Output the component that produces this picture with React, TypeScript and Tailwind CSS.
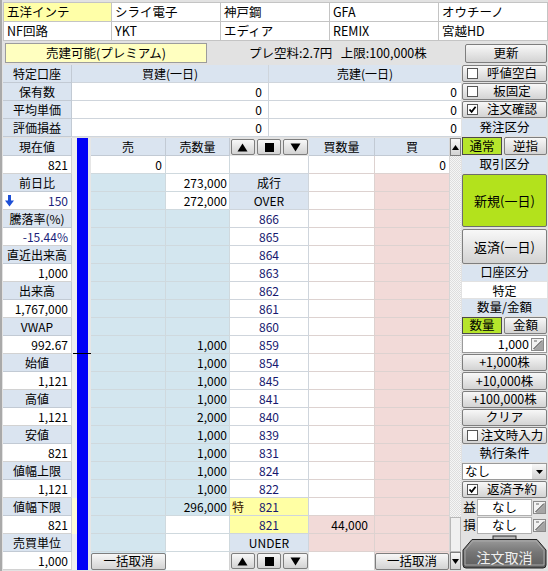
import React from "react";

const W = "bg-white";
const S = "bg-[#d3e6ef]";
const B = "bg-[#f2dad8]";
const L = "bg-[#dae4f0]";
const Y = "bg-[#ffffa4]";

const tabs = [
  ["五洋インテ", "シライ電子", "神戸鋼", "GFA", "オウチーノ"],
  ["NF回路", "YKT", "エディア", "REMIX", "宮越HD"],
];

const leftCol: { text: string; kind: "l" | "v"; color?: string; arrow?: boolean; gap?: string }[] = [
  { text: "現在値", kind: "l" },
  { text: "821", kind: "v" },
  { text: "前日比", kind: "l" },
  { text: "150", kind: "v", color: "text-[#1b1f7a]", arrow: true },
  { text: "騰落率(%)", kind: "l" },
  { text: "-15.44%", kind: "v", color: "text-[#1b1f7a]" },
  { text: "直近出来高", kind: "l" },
  { text: "1,000", kind: "v" },
  { text: "出来高", kind: "l" },
  { text: "1,767,000", kind: "v" },
  { text: "VWAP", kind: "l" },
  { text: "992.67", kind: "v" },
  { text: "始値", kind: "l" },
  { text: "1,121", kind: "v" },
  { text: "高値", kind: "l" },
  { text: "1,121", kind: "v" },
  { text: "安値", kind: "l" },
  { text: "821", kind: "v" },
  { text: "値幅上限", kind: "l" },
  { text: "1,121", kind: "v" },
  { text: "値幅下限", kind: "l", gap: "bg-[#fdfbd8]" },
  { text: "821", kind: "v", gap: "bg-[#fdfbd8]" },
  { text: "売買単位", kind: "l" },
  { text: "1,000", kind: "v" },
];

type BoardRow = {
  sell?: string;
  sellBg: string;
  sq?: string;
  sqBg: string;
  price?: string;
  priceBg: string;
  priceNum?: boolean;
  toku?: boolean;
  bq?: string;
  bqBg: string;
  buy?: string;
  buyBg: string;
};

const ladder: [string, string][] = [
  ["866", ""],
  ["865", ""],
  ["864", ""],
  ["863", ""],
  ["862", ""],
  ["861", ""],
  ["860", ""],
  ["859", "1,000"],
  ["854", "1,000"],
  ["845", "1,000"],
  ["841", "1,000"],
  ["840", "2,000"],
  ["839", "1,000"],
  ["831", "1,000"],
  ["824", "1,000"],
  ["822", "1,000"],
];

const boardRows: BoardRow[] = [
  { sell: "0", sellBg: W, sqBg: W, priceBg: W, bqBg: W, buy: "0", buyBg: W },
  { sellBg: S, sq: "273,000", sqBg: W, price: "成行", priceBg: L, bqBg: W, buyBg: B },
  { sellBg: S, sq: "272,000", sqBg: W, price: "OVER", priceBg: L, bqBg: W, buyBg: B },
  ...ladder.map(([p, q]) => ({
    sellBg: S,
    sq: q,
    sqBg: S,
    price: p,
    priceBg: W,
    priceNum: true,
    bqBg: W,
    buyBg: B,
  })),
  { sellBg: S, sq: "296,000", sqBg: S, price: "821", priceBg: Y, priceNum: true, toku: true, bqBg: W, buyBg: B },
  { sellBg: S, sqBg: W, price: "821", priceBg: Y, priceNum: true, bq: "44,000", bqBg: B, buyBg: B },
  { sellBg: S, sqBg: W, price: "UNDER", priceBg: L, bqBg: B, buyBg: B },
];

function Btn({ children, className = "" }: { children?: React.ReactNode; className?: string }) {
  return (
    <div
      className={`flex items-center justify-center border border-[#7e7e7e] rounded-[2px] bg-linear-to-b from-[#f8f8f8] to-[#d3d3d3] ${className}`}
    >
      {children}
    </div>
  );
}

function Box({ checked }: { checked?: boolean }) {
  return (
    <span className="w-[11px] h-[11px] border border-[#555] bg-white flex items-center justify-center shrink-0">
      {checked && (
        <svg width="9" height="9" viewBox="0 0 9 9">
          <path d="M1.5 4.5 L3.6 6.8 L7.6 1.8" stroke="#000" strokeWidth="1.8" fill="none" />
        </svg>
      )}
    </span>
  );
}

function CheckBtn({ label, checked, h = "h-[17px]" }: { label: string; checked?: boolean; h?: string }) {
  return (
    <Btn className={`${h} !justify-start pl-[4px]`}>
      <Box checked={checked} />
      <span className="flex-1 text-center">{label}</span>
    </Btn>
  );
}

function Lbl({ children, className = "" }: { children: React.ReactNode; className?: string }) {
  return <div className={`${L} flex items-center justify-center ${className}`}>{children}</div>;
}

function Spin() {
  return (
    <svg width="13" height="13" viewBox="0 0 13 13" className="shrink-0">
      <rect x="0.5" y="0.5" width="12" height="12" fill="#f2f2f2" stroke="#8a8a8a" />
      <path d="M12 2.5 L12 12 L2.5 12 Z" fill="#a4a4a4" />
      <path d="M2.5 11 L11 2.5" stroke="#222" strokeWidth="1" />
      <path d="M3 3 L6 3" stroke="#666" strokeWidth="1" />
    </svg>
  );
}

function Tri({ dir }: { dir: "up" | "down" | "sq" }) {
  if (dir === "sq") {
    return <span className="w-[9px] h-[9px] bg-black" />;
  }
  return (
    <svg width="11" height="9" viewBox="0 0 11 9">
      {dir === "up" ? <path d="M5.5 0.5 L10.5 8.5 L0.5 8.5 Z" fill="#000" /> : <path d="M0.5 0.5 L10.5 0.5 L5.5 8.5 Z" fill="#000" />}
    </svg>
  );
}

function ArrowButtons() {
  return (
    <div className="h-full w-full flex items-center gap-[2px] px-px">
      <Btn className="w-[24px] h-[16px]">
        <Tri dir="up" />
      </Btn>
      <Btn className="w-[25px] h-[16px]">
        <Tri dir="sq" />
      </Btn>
      <Btn className="w-[25px] h-[16px]">
        <Tri dir="down" />
      </Btn>
    </div>
  );
}

function CancelButton() {
  return (
    <div className="relative h-[34px] w-full">
      <svg width="85" height="34" viewBox="0 0 85 34" className="absolute inset-0">
        <defs>
          <linearGradient id="cg" x1="0" y1="0" x2="0" y2="1">
            <stop offset="0" stopColor="#9a9a9a" />
            <stop offset="0.45" stopColor="#767676" />
            <stop offset="1" stopColor="#5c5c5c" />
          </linearGradient>
        </defs>
        <rect x="31" y="1" width="23" height="4" fill="#b8b8b8" stroke="#333" strokeWidth="1" />
        <path d="M10 4.5 L75 4.5 L84 15 L84 30 Q84 33 81 33 L4 33 Q1 33 1 30 L1 15 Z" fill="url(#cg)" stroke="#222" strokeWidth="1" />
        <path d="M11 6 L74 6 L82 15.5 L82 30 L3 30 L3 15.5 Z" fill="none" stroke="#a8a8a8" strokeWidth="1" />
      </svg>
      <div className="absolute inset-0 pt-[9px] flex items-center justify-center text-[14px] text-[#efefef]">注文取消</div>
    </div>
  );
}

export default function App() {
  return (
    <div className="relative w-[548px] h-[571px] overflow-hidden bg-[#e2e2e2] border-l-2 border-[#a9a9a9] pl-px text-[12px] leading-none text-black font-['Noto_Sans_CJK_JP',sans-serif] select-none">
      {/* favourite stock tabs */}
      <div className="pt-[2px]">
        {tabs.map((row, r) => (
          <div key={r} className={`grid grid-cols-5 ${r === 0 ? "h-[20px] border-t" : "h-[19px]"} border-[#c4c4c4]`}>
            {row.map((t, i) => (
              <div
                key={t}
                className={`border-b border-r border-[#c4c4c4] pl-[3px] flex items-center text-[12.5px] ${
                  r === 0 && i === 0 ? "bg-[#ffffa8]" : "bg-white"
                } ${i === 0 ? "border-l" : ""}`}
              >
                {t}
              </div>
            ))}
          </div>
        ))}
      </div>

      {/* status line */}
      <div className="flex items-center h-[22px] mt-px">
        <div className="ml-[2px] w-[202px] h-[20px] bg-[#ffffc0] border border-[#9c9c9c] flex items-center justify-center text-[12.5px]">
          売建可能(プレミアム)
        </div>
        <div className="ml-[42px] text-[12.5px] whitespace-pre">プレ空料:2.7円   上限:100,000株</div>
        <Btn className="ml-auto mr-px w-[82px] h-[19px] text-[12.5px]">更新</Btn>
      </div>

      <div className="flex mt-px">
        {/* left: positions + board */}
        <div className="w-[458px] flex flex-col">
          <div className="flex flex-col">
            {[
              ["特定口座", "買建(一日)", "売建(一日)"],
              ["保有数", "0", "0"],
              ["平均単価", "0", "0"],
              ["評価損益", "0", "0"],
            ].map((r, i) => (
              <div key={r[0]} className="flex h-[18px]">
                <div className={`w-[69px] ${L} border-b border-r border-[#c2cad4] flex items-center justify-center`}>{r[0]}</div>
                <div
                  className={`w-[197px] ${i === 0 ? L : W} border-b border-r border-[#cfd5dc] flex items-center ${
                    i === 0 ? "justify-center" : "justify-end pr-[6px]"
                  }`}
                >
                  {r[1]}
                </div>
                <div
                  className={`w-[192px] ${i === 0 ? L : W} border-b border-[#cfd5dc] flex items-center ${
                    i === 0 ? "justify-center" : "justify-end pr-[4px]"
                  }`}
                >
                  {r[2]}
                </div>
              </div>
            ))}
          </div>

          <div className="relative flex mt-px h-[432px]">
            {/* quote labels */}
            <div className="w-[74px] flex flex-col">
              {leftCol.map((c, i) => (
                <div key={i} className="flex h-[18px]">
                  <div
                    className={`w-[69px] border-b border-r ${
                      c.kind === "l"
                        ? `${L} border-[#c2cad4] justify-center`
                        : `${W} border-[#d2d2d2] justify-end pr-[3px]`
                    } flex items-center ${c.color ?? ""}`}
                  >
                    {c.arrow && (
                      <svg width="9" height="12" viewBox="0 0 9 12" className="mr-auto ml-[2px]">
                        <rect x="3" y="0" width="3" height="6" fill="#1d4fd6" />
                        <path d="M0 5.5 L9 5.5 L4.5 11.5 Z" fill="#1d4fd6" />
                      </svg>
                    )}
                    {c.text}
                  </div>
                  <div className={`w-[5px] ${c.gap ?? "bg-[#efefef]"}`} />
                </div>
              ))}
            </div>

            {/* current price bar */}
            <div className="w-[11px] bg-[#0000f6]" />
            <div className="w-[3px] bg-[#e6e6e6]" />
            <div className="absolute left-[70px] top-[215px] w-[18px] h-px bg-black" />

            {/* order board */}
            <div className="w-[358px] flex flex-col">
              <div className={`flex h-[18px] ${L}`}>
                <div className="w-[75px] border-b border-r border-[#c2cad4] flex items-center justify-center">売</div>
                <div className="w-[64px] border-b border-r border-[#c2cad4] flex items-center justify-center">売数量</div>
                <div className="w-[79px] bg-[#e4e4e4]">
                  <ArrowButtons />
                </div>
                <div className="w-[66px] border-b border-r border-[#c2cad4] flex items-center justify-center">買数量</div>
                <div className="w-[74px] border-b border-[#c2cad4] flex items-center justify-center">買</div>
              </div>
              {boardRows.map((r, i) => (
                <div key={i} className="flex h-[18px]">
                  <div className={`w-[75px] ${r.sellBg} border-b border-r border-[#cfd9de] flex items-center justify-end pr-[3px]`}>
                    {r.sell}
                  </div>
                  <div className={`w-[64px] ${r.sqBg} border-b border-r border-[#cfd9de] flex items-center justify-end pr-[2px]`}>
                    {r.sq}
                  </div>
                  <div
                    className={`relative w-[79px] ${r.priceBg} border-b border-r border-[#cfd5dc] flex items-center justify-center ${
                      r.priceNum ? "text-[#16186e]" : ""
                    }`}
                  >
                    {r.toku && <span className="absolute left-[2px] text-[#3a2000]">特</span>}
                    {r.price}
                  </div>
                  <div className={`w-[66px] ${r.bqBg} border-b border-r border-[#ddd2d0] flex items-center justify-end pr-[6px]`}>
                    {r.bq}
                  </div>
                  <div className={`w-[74px] ${r.buyBg} border-b border-[#ddd2d0] flex items-center justify-end pr-[3px]`}>
                    {r.buy}
                  </div>
                </div>
              ))}
              <div className="flex h-[18px]">
                <div className={`w-[75px] ${S} flex items-center`}>
                  <Btn className="w-full h-[17px] text-[12.5px]">一括取消</Btn>
                </div>
                <div className={`w-[64px] ${W} border-r border-[#d2d2d2]`} />
                <div className="w-[79px] bg-[#e4e4e4]">
                  <ArrowButtons />
                </div>
                <div className={`w-[66px] ${W} border-r border-[#d2d2d2]`} />
                <div className={`w-[74px] ${B} flex items-center`}>
                  <Btn className="w-full h-[17px] text-[12.5px]">一括取消</Btn>
                </div>
              </div>
            </div>

            {/* scrollbar */}
            <div className="w-[12px] flex flex-col border-l border-[#d6d6d6]">
              <Btn className="h-[18px] rounded-none">
                <svg width="7" height="5" viewBox="0 0 7 5">
                  <path d="M3.5 0 L7 5 L0 5 Z" fill="#000" />
                </svg>
              </Btn>
              <div className="flex-1 bg-[repeating-conic-gradient(#f6f6f6_0%_25%,#dedede_0%_50%)] bg-[length:2px_2px]" />
              <div className="h-[35px] bg-[#f0f0f0] border border-[#b8b8b8]" />
              <Btn className="h-[18px] rounded-none">
                <svg width="7" height="5" viewBox="0 0 7 5">
                  <path d="M0 0 L7 0 L3.5 5 Z" fill="#000" />
                </svg>
              </Btn>
            </div>
          </div>
        </div>

        {/* order panel */}
        <div className="ml-px w-[85px] flex flex-col gap-px text-[12.5px]">
          <CheckBtn label="呼値空白" />
          <CheckBtn label="板固定" />
          <CheckBtn label="注文確認" checked />
          <Lbl className="h-[17px]">発注区分</Lbl>
          <div className="h-[18px] flex gap-[2px]">
            <div className="w-[40px] bg-[#b6e52c] border border-[#4a4a4a] flex items-center justify-center">通常</div>
            <Btn className="flex-1">逆指</Btn>
          </div>
          <Lbl className="h-[17px]">取引区分</Lbl>
          <div className="h-[54px] pb-px">
            <div className="h-full bg-[#b3e21c] border border-[#6d6d6d] rounded-[2px] flex items-center justify-center text-[13px]">
              新規(一日)
            </div>
          </div>
          <Btn className="h-[35px] text-[13px]">返済(一日)</Btn>
          <Lbl className="h-[16px] text-[12px] pb-[2px]">口座区分</Lbl>
          <div className="h-[16px] bg-white flex items-center justify-center text-[12px] pt-[2px]">特定</div>
          <Lbl className="h-[17px]">数量/金額</Lbl>
          <div className="h-[17px] flex gap-[2px]">
            <div className="w-[40px] bg-[#b6e52c] border border-[#4a4a4a] flex items-center justify-center">数量</div>
            <Btn className="flex-1">金額</Btn>
          </div>
          <div className="h-[18px] bg-white border border-[#9a9a9a] flex items-center justify-end pr-[2px] gap-[2px]">
            <span>1,000</span>
            <Spin />
          </div>
          <Btn className="h-[17px]">+1,000株</Btn>
          <Btn className="h-[18px]">+10,000株</Btn>
          <Btn className="h-[17px]">+100,000株</Btn>
          <Btn className="h-[17px]">クリア</Btn>
          <CheckBtn label="注文時入力" />
          <Lbl className="h-[17px]">執行条件</Lbl>
          <div className="h-[17px] bg-white border border-[#9a9a9a] flex items-center pl-[2px]">
            <span className="flex-1">なし</span>
            <Btn className="w-[14px] h-[15px] rounded-none border-0">
              <svg width="7" height="4" viewBox="0 0 7 4">
                <path d="M0 0 L7 0 L3.5 4 Z" fill="#000" />
              </svg>
            </Btn>
          </div>
          <CheckBtn label="返済予約" checked />
          {["益", "損"].map((k) => (
            <div key={k} className="h-[17px] flex items-center">
              <span className="w-[15px] text-center">{k}</span>
              <div className="flex-1 h-full bg-white border border-[#b0b0b0] flex items-center justify-center">なし</div>
              <div className="w-[15px] flex items-center justify-center">
                <Spin />
              </div>
            </div>
          ))}
          <CancelButton />
        </div>
      </div>
    </div>
  );
}
